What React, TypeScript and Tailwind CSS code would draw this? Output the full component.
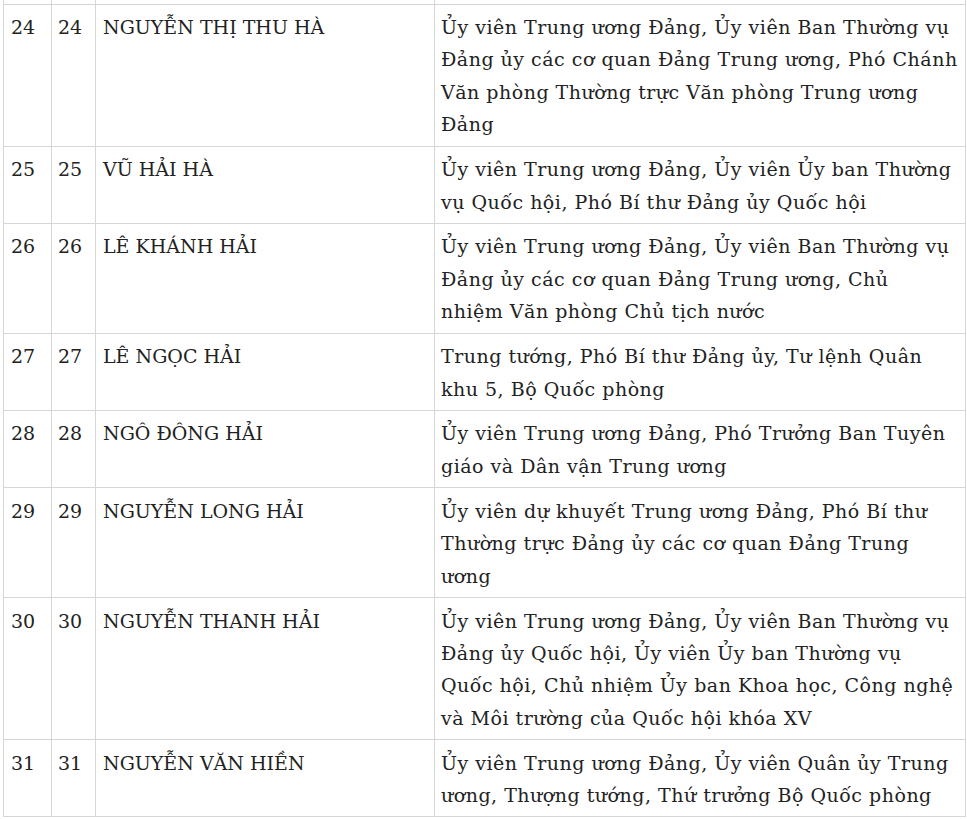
const ROWS: { n: number; name: string; lines: string[] }[] = [
  {
    n: 24,
    name: "NGUYỄN THỊ THU HÀ",
    lines: [
      "Ủy viên Trung ương Đảng, Ủy viên Ban Thường vụ",
      "Đảng ủy các cơ quan Đảng Trung ương, Phó Chánh",
      "Văn phòng Thường trực Văn phòng Trung ương",
      "Đảng",
    ],
  },
  {
    n: 25,
    name: "VŨ HẢI HÀ",
    lines: ["Ủy viên Trung ương Đảng, Ủy viên Ủy ban Thường", "vụ Quốc hội, Phó Bí thư Đảng ủy Quốc hội"],
  },
  {
    n: 26,
    name: "LÊ KHÁNH HẢI",
    lines: [
      "Ủy viên Trung ương Đảng, Ủy viên Ban Thường vụ",
      "Đảng ủy các cơ quan Đảng Trung ương, Chủ",
      "nhiệm Văn phòng Chủ tịch nước",
    ],
  },
  {
    n: 27,
    name: "LÊ NGỌC HẢI",
    lines: ["Trung tướng, Phó Bí thư Đảng ủy, Tư lệnh Quân", "khu 5, Bộ Quốc phòng"],
  },
  {
    n: 28,
    name: "NGÔ ĐÔNG HẢI",
    lines: ["Ủy viên Trung ương Đảng, Phó Trưởng Ban Tuyên", "giáo và Dân vận Trung ương"],
  },
  {
    n: 29,
    name: "NGUYỄN LONG HẢI",
    lines: [
      "Ủy viên dự khuyết Trung ương Đảng, Phó Bí thư",
      "Thường trực Đảng ủy các cơ quan Đảng Trung",
      "ương",
    ],
  },
  {
    n: 30,
    name: "NGUYỄN THANH HẢI",
    lines: [
      "Ủy viên Trung ương Đảng, Ủy viên Ban Thường vụ",
      "Đảng ủy Quốc hội, Ủy viên Ủy ban Thường vụ",
      "Quốc hội, Chủ nhiệm Ủy ban Khoa học, Công nghệ",
      "và Môi trường của Quốc hội khóa XV",
    ],
  },
  {
    n: 31,
    name: "NGUYỄN VĂN HIỀN",
    lines: [
      "Ủy viên Trung ương Đảng, Ủy viên Quân ủy Trung",
      "ương, Thượng tướng, Thứ trưởng Bộ Quốc phòng",
    ],
  },
];

export default function App() {
  return (
    <div className="h-[819px] overflow-hidden bg-white pl-[3px]">
      <table
        className="w-[962px] table-fixed border-collapse text-[19px] leading-[32.4px] text-[#222]"
        style={{ fontFamily: '"DejaVu Serif", "Liberation Serif", serif' }}
      >
        <colgroup>
          <col className="w-[48px]" />
          <col className="w-[44px]" />
          <col className="w-[339px]" />
          <col className="w-[531px]" />
        </colgroup>
        <tbody>
          <tr>
            <td className="h-[4px] border-x border-b border-[#d6d6d6] p-0" />
            <td className="h-[4px] border-x border-b border-[#d6d6d6] p-0" />
            <td className="h-[4px] border-x border-b border-[#d6d6d6] p-0" />
            <td className="h-[4px] border-x border-b border-[#d6d6d6] p-0" />
          </tr>
          {ROWS.map((r) => (
            <tr key={r.n}>
              <td className="border border-[#d6d6d6] px-[7px] pt-[6.5px] pb-[5px] align-top">{r.n}</td>
              <td className="border border-[#d6d6d6] px-[6px] pt-[6.5px] pb-[5px] align-top">{r.n}</td>
              <td className="border border-[#d6d6d6] px-[7px] pt-[6.5px] pb-[5px] align-top whitespace-nowrap">{r.name}</td>
              <td className="overflow-hidden border border-[#d6d6d6] px-[6px] pt-[6.5px] pb-[5px] align-top tracking-[0.5px]">
                {r.lines.map((l) => (
                  <div key={l} className="whitespace-nowrap">
                    {l}
                  </div>
                ))}
              </td>
            </tr>
          ))}
        </tbody>
      </table>
    </div>
  );
}
